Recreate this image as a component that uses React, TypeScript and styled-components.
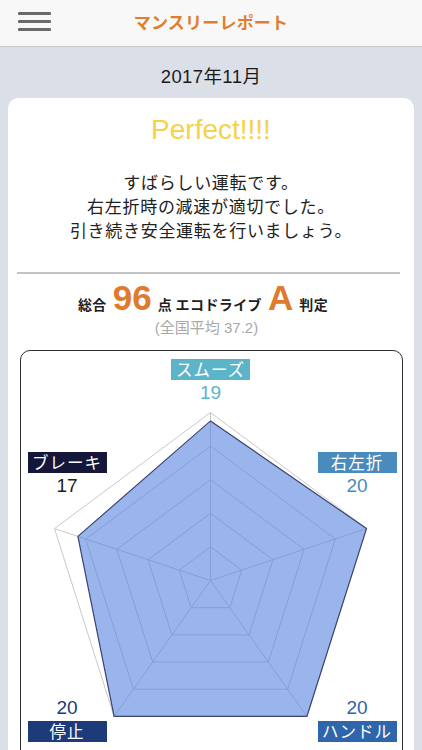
import React from 'react';
import styled, { createGlobalStyle } from 'styled-components';

// Styles

const GlobalStyle = createGlobalStyle`
  html, body {
    margin: 0;
    padding: 0;
    background: #dbdfe8;
    font-family: "Liberation Sans", "Noto Sans CJK JP", sans-serif;
    overflow: hidden;
  }
`;

const Page = styled.div`
  width: 422px;
  min-height: 750px;
  background: #dbdfe8;
`;

const Header = styled.header`
  height: 42px;
  padding-bottom: 4px;
  background: #f8f8f8;
  border-bottom: 1px solid #c6c7cd;
  display: grid;
  grid-template-columns: 70px 1fr 70px;
  align-items: center;
`;

const Burger = styled.button`
  margin-left: 18px;
  width: 33px;
  padding: 0;
  border: 0;
  background: transparent;
  display: flex;
  flex-direction: column;
  gap: 5px;

  span {
    display: block;
    height: 3px;
    background: #6a6a6a;
    border-radius: 1px;
  }
`;

const HeaderTitle = styled.h1`
  margin: 0;
  text-align: center;
  font-family: "Noto Sans CJK JP", sans-serif;
  font-size: 17px;
  font-weight: 600;
  color: #e07d30;
  letter-spacing: 0.2px;
`;

const DateBar = styled.div`
  padding: 20px 0 11px;
  line-height: 20px;
  text-align: center;
  font-size: 18.5px;
  letter-spacing: 0.4px;
  color: #1b1b1b;
`;

const Card = styled.section`
  margin: 0 8px;
  padding-top: 14px;
  min-height: 700px;
  background: #fff;
  border-radius: 10px 10px 0 0;
  display: flex;
  flex-direction: column;
`;

const Verdict = styled.div`
  line-height: 36px;
  text-align: center;
  font-size: 28px;
  color: #f5d24a;
`;

const Message = styled.p`
  margin: 22px 0 0;
  text-align: center;
  font-family: "Noto Sans CJK JP", sans-serif;
  font-size: 17px;
  letter-spacing: 0.7px;
  line-height: 24px;
  color: #222;
`;

const Divider = styled.hr`
  margin: 30px 14px 0 9px;
  height: 2px;
  border: 0;
  background: #c4c4c4;
`;

const ScoreRow = styled.div`
  margin-top: 6px;
  height: 36px;
  padding-right: 16px;
  display: flex;
  justify-content: center;
  align-items: baseline;
  gap: 6px;
  color: #1e1e1e;
`;

const Small = styled.span`
  font-family: "Noto Sans CJK JP", sans-serif;
  font-size: 14px;
  letter-spacing: 0.4px;
  font-weight: 700;
`;

const Big = styled.span`
  font-size: 35px;
  line-height: 36px;
  font-weight: 700;
  color: #e07a2c;
`;

const Average = styled.div`
  margin-top: 2px;
  padding-right: 9px;
  line-height: 20px;
  text-align: center;
  font-size: 15px;
  color: #a9a9a9;
`;

const ChartBox = styled.div`
  position: relative;
  margin: 12px 11px 0 12px;
  height: 430px;
  border: 1.5px solid #2e2e2e;
  border-radius: 10px;
`;

const LabelGroup = styled.div<{ $x: number; $y: number }>`
  position: absolute;
  left: ${(p) => p.$x}px;
  top: ${(p) => p.$y}px;
  width: 79px;
  display: flex;
  flex-direction: column;
  align-items: center;
`;

const Tag = styled.div<{ $bg: string }>`
  width: 100%;
  height: 21px;
  line-height: 21px;
  text-align: center;
  background: ${(p) => p.$bg};
  color: #fff;
  font-family: "Noto Sans CJK JP", sans-serif;
  font-size: 16.5px;
  letter-spacing: 1px;
`;

const Value = styled.div<{ $color: string }>`
  line-height: 26px;
  font-size: 19px;
  color: ${(p) => p.$color};
`;

interface Axis {
  name: string;
  value: number;
  bg: string;
  text: string;
  x: number;
  y: number;
  below: boolean;
}

// clockwise from the top
const axes: Axis[] = [
  { name: 'スムーズ', value: 19, bg: '#5cb4c9', text: '#5cb4c9', x: 150, y: 7.5, below: true },
  { name: '右左折', value: 20, bg: '#4a8bbd', text: '#4a8bbd', x: 296.5, y: 100.5, below: true },
  { name: 'ハンドル', value: 20, bg: '#2f65ab', text: '#2f65ab', x: 296.5, y: 344, below: false },
  { name: '停止', value: 20, bg: '#1d3a7b', text: '#1d3a7b', x: 6.5, y: 344, below: false },
  { name: 'ブレーキ', value: 17, bg: '#15173a', text: '#1e1e1e', x: 6.5, y: 100.5, below: true },
];

const CX = 189.5;
const CY = 229.5;
const RX = 164;
const RY = 168;
const MAX = 20;

function coords(i: number, f: number): [number, number] {
  const a = ((-90 + i * 72) * Math.PI) / 180;
  return [CX + RX * f * Math.cos(a), CY + RY * f * Math.sin(a)];
}

function ring(f: number): string {
  return axes.map((_, i) => coords(i, f).map((n) => n.toFixed(1)).join(',')).join(' ');
}

function Radar(): JSX.Element {
  const data = axes
    .map((a, i) => coords(i, a.value / MAX).map((n) => n.toFixed(1)).join(','))
    .join(' ');
  return (
    <svg width="380" height="427" style={{ display: 'block' }}>
      {[0.2, 0.4, 0.6, 0.8, 1].map((f) => (
        <polygon key={f} points={ring(f)} fill="none" stroke="#c9c9c9" strokeWidth="1" />
      ))}
      {axes.map((a, i) => {
        const [x, y] = coords(i, 1);
        return <line key={a.name} x1={CX} y1={CY} x2={x} y2={y} stroke="#c9c9c9" strokeWidth="1" />;
      })}
      <polygon points={data} fill="rgba(86,132,224,0.6)" stroke="#3a4372" strokeWidth="1.2" />
    </svg>
  );
}

function App(): JSX.Element {
  return (
    <Page>
      <GlobalStyle />
      <Header>
        <Burger aria-label="menu">
          <span />
          <span />
          <span />
        </Burger>
        <HeaderTitle>マンスリーレポート</HeaderTitle>
        <div />
      </Header>
      <DateBar>2017年11月</DateBar>
      <Card>
        <Verdict>Perfect!!!!</Verdict>
        <Message>
          すばらしい運転です。
          <br />
          右左折時の減速が適切でした。
          <br />
          引き続き安全運転を行いましょう。
        </Message>
        <Divider />
        <ScoreRow>
          <Small>総合</Small>
          <Big>96</Big>
          <Small>点 エコドライブ</Small>
          <Big>A</Big>
          <Small>判定</Small>
        </ScoreRow>
        <Average>(全国平均 37.2)</Average>
        <ChartBox>
          <Radar />
          {axes.map((a) => (
            <LabelGroup key={a.name} $x={a.x} $y={a.y}>
              {a.below ? (
                <>
                  <Tag $bg={a.bg}>{a.name}</Tag>
                  <Value $color={a.text}>{a.value}</Value>
                </>
              ) : (
                <>
                  <Value $color={a.text}>{a.value}</Value>
                  <Tag $bg={a.bg}>{a.name}</Tag>
                </>
              )}
            </LabelGroup>
          ))}
        </ChartBox>
      </Card>
    </Page>
  );
}

export default App;
